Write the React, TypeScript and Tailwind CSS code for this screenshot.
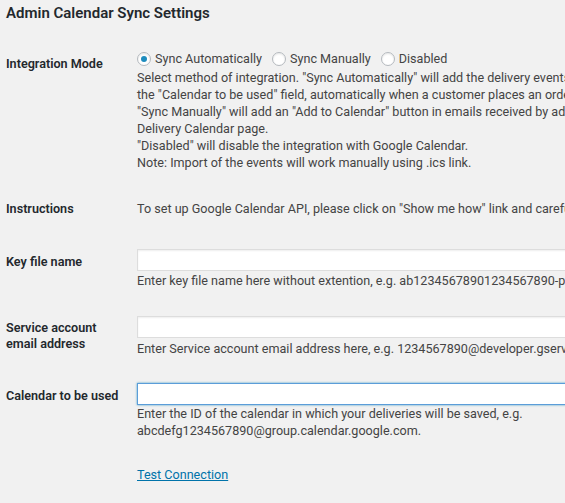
import React from "react";

function Radio({ checked, label }: { checked?: boolean; label: string }) {
  return (
    <label className="flex items-center mr-[10px]">
      <span className="flex items-center justify-center w-[14px] h-[14px] rounded-full border border-[#b4b9be] bg-white shadow-[inset_0_1px_2px_rgba(0,0,0,0.1)]">
        {checked && <span className="w-[6px] h-[6px] rounded-full bg-[#1e8cbe]" />}
      </span>
      <span className="ml-[4px]">{label}</span>
    </label>
  );
}

function TextInput({ focused }: { focused?: boolean }) {
  return (
    <div
      className={
        focused
          ? "w-[520px] h-[22px] bg-white border border-[#5b9dd9] shadow-[0_0_2px_rgba(30,140,190,0.8)]"
          : "w-[520px] h-[22px] bg-white border border-[#dddddd] shadow-[inset_0_1px_2px_rgba(0,0,0,0.07)]"
      }
    />
  );
}

export default function App() {
  return (
    <div
      className="w-screen h-screen overflow-hidden bg-[#f1f1f1] text-[12.6px] text-[#444444]"
      style={{ fontFamily: "Roboto, 'Liberation Sans', sans-serif" }}
    >
      <div className="pl-[6px] w-[900px]">
        <h2 className="pt-[3px] text-[15px] leading-[20px] font-semibold text-[#23282d]">
          Admin Calendar Sync Settings
        </h2>

        {/* Integration Mode */}
        <div className="flex items-start mt-[27px]">
          <div className="w-[131px] shrink-0 pt-[5px] leading-[17px] font-semibold text-[#23282d]">
            Integration Mode
          </div>
          <div className="flex-1">
            <div className="flex items-center h-[18px]">
              <Radio checked label="Sync Automatically" />
              <Radio label="Sync Manually" />
              <Radio label="Disabled" />
            </div>
            <div className="mt-[1px] leading-[17px] whitespace-nowrap">
              <div>
                Select method of integration. "Sync Automatically" will add the delivery events to the Google calendar, which is set in
              </div>
              <div>
                the "Calendar to be used" field, automatically when a customer places an order. Also an "Add to Calendar" button is added.
              </div>
              <div>
                "Sync Manually" will add an "Add to Calendar" button in emails received by admin and on
              </div>
              <div>Delivery Calendar page.</div>
              <div>"Disabled" will disable the integration with Google Calendar.</div>
              <div>Note: Import of the events will work manually using .ics link.</div>
            </div>
          </div>
        </div>

        {/* Instructions */}
        <div className="flex items-start mt-[29px] leading-[17px]">
          <div className="w-[131px] shrink-0 font-semibold text-[#23282d]">Instructions</div>
          <div className="flex-1 whitespace-nowrap">
            To set up Google Calendar API, please click on "Show me how" link and carefully follow these steps:
          </div>
        </div>

        {/* Key file name */}
        <div className="flex items-start mt-[32px]">
          <div className="w-[131px] shrink-0 pt-[4px] leading-[17px] font-semibold text-[#23282d]">
            Key file name
          </div>
          <div className="flex-1">
            <TextInput />
            <div className="mt-[1px] leading-[17px] whitespace-nowrap">
              Enter key file name here without extention, e.g. ab12345678901234567890-privatekey.
            </div>
          </div>
        </div>

        {/* Service account */}
        <div className="flex items-start mt-[27px]">
          <div className="w-[131px] shrink-0 pt-[4px] leading-[16px] font-semibold text-[#23282d]">
            Service account
            <br />
            email address
          </div>
          <div className="flex-1">
            <TextInput />
            <div className="mt-[2px] leading-[17px] whitespace-nowrap">
              Enter Service account email address here, e.g. 1234567890@developer.gserviceaccount.com.
            </div>
          </div>
        </div>

        {/* Calendar to be used */}
        <div className="flex items-start mt-[26px]">
          <div className="w-[131px] shrink-0 pt-[4px] leading-[17px] font-semibold text-[#23282d]">
            Calendar to be used
          </div>
          <div className="flex-1">
            <TextInput focused />
            <div className="mt-[0px] leading-[17px] whitespace-nowrap">
              <div>Enter the ID of the calendar in which your deliveries will be saved, e.g.</div>
              <div>abcdefg1234567890@group.calendar.google.com.</div>
            </div>
          </div>
        </div>

        {/* Test Connection */}
        <div className="flex mt-[27px] leading-[17px]">
          <div className="w-[131px] shrink-0" />
          <a href="#" className="text-[#0073aa] underline">
            Test Connection
          </a>
        </div>
      </div>
    </div>
  );
}
